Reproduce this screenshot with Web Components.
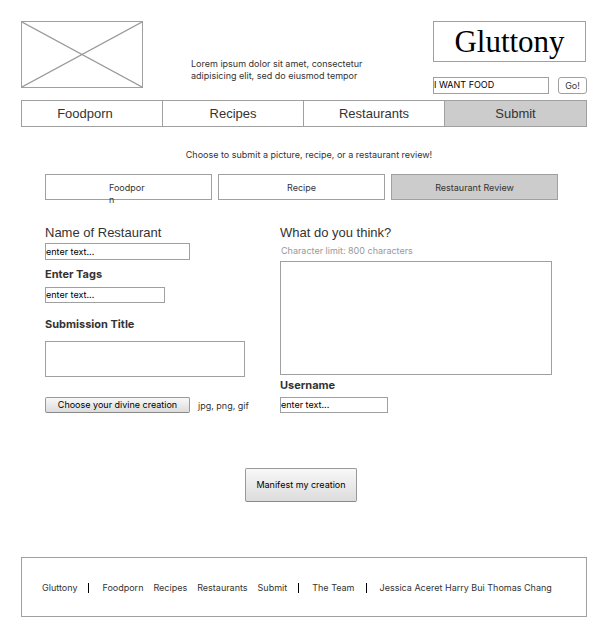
<!DOCTYPE html>
<html lang="en">
<head>
<meta charset="utf-8">
<meta name="viewport" content="width=device-width, initial-scale=1">
<title>Gluttony – Submit</title>
<style>
  body {
    margin: 0;
    padding: 21px 25px 20px 21px;
    background: #fff;
    color: #333;
    font: 9px/12px Inter, "Liberation Sans", sans-serif;
    --line: #a0a0a0;
    --active: #ccc;
    --heading: "Liberation Sans", Arial, sans-serif;
  }
</style>
</head>
<body>
<gluttony-page></gluttony-page>

<script>
const base = `
  *, *::before, *::after { box-sizing: border-box; }
  button, input, textarea { font: inherit; margin: 0; border-radius: 0; outline: 0; }
  a { color: inherit; text-decoration: none; }
`;

function define(name, css, html) {
  customElements.define(name, class extends HTMLElement {
    constructor() {
      super();
      this.attachShadow({ mode: 'open' }).innerHTML =
        `<style>${base}${css}</style>${typeof html === 'function' ? html(this) : html}`;
    }
  });
}

define('image-placeholder', `
  :host { display: block; width: 122px; height: 67px; border: 1px solid var(--line); box-sizing: border-box; }
  svg { display: block; width: 100%; height: 100%; }
`, `<svg viewBox="0 0 120 65" preserveAspectRatio="none" role="img" aria-label="Image placeholder">
  <path d="M0 0L120 65M0 65L120 0" fill="none" stroke="#999" stroke-width="1.2"/></svg>`);

define('site-search', `
  :host { display: block; }
  form { display: flex; justify-content: space-between; gap: 9px; margin: 0; }
  input { flex: 0 1 116px; min-width: 0; height: 17px; padding: 0 0 2px; border: 1px solid var(--line); background: #fff; color: #000; }
  button { flex: none; width: 29px; height: 17px; padding: 0; border: 1px solid var(--line); border-radius: 3px; background: #fff; color: #333; }
`, `<form><input type="text" aria-label="Search food" value="I WANT FOOD"><button type="button">Go!</button></form>`);

define('site-header', `
  :host { display: flex; height: 79px; align-items: flex-start; }
  p { margin: 37px 0 0 48px; max-width: 180px; }
  .brand { margin-left: auto; width: 154px; display: grid; gap: 15px; }
  h1 { margin: 0 1px 0 0; height: 41px; border: 1px solid var(--line); font: 31px/39px "Liberation Serif", "Times New Roman", serif; color: #000; text-align: center; }
`, `<image-placeholder></image-placeholder>
  <p>Lorem ipsum dolor sit amet, consectetur adipisicing elit, sed do eiusmod tempor</p>
  <div class="brand"><h1>Gluttony</h1><site-search></site-search></div>`);

define('main-nav', `
  :host { display: block; }
  nav { display: grid; grid-template-columns: repeat(4, 1fr); border: 1px solid var(--line); font: 13px/25px var(--heading); }
  a { text-align: center; border-right: 1px solid var(--line); }
  a:first-child { padding-right: 14px; }
  a:last-child { border-right: 0; }
  a[aria-current] { background: var(--active); }
`, `<nav aria-label="Main"><a href="#foodporn">Foodporn</a><a href="#recipes">Recipes</a><a href="#restaurants">Restaurants</a><a href="#submit" aria-current="page">Submit</a></nav>`);

define('type-picker', `
  :host { display: grid; grid-template-columns: repeat(3, 1fr); gap: 6px; }
  button { height: 26px; padding: 7px 0 0; border: 1px solid var(--line); background: #fff; color: #333; display: flex; justify-content: center; align-items: flex-start; }
  button[aria-pressed=true] { background: var(--active); }
  .narrow { width: 37px; margin-right: 2px; text-align: left; overflow-wrap: anywhere; }
`, `<button type="button" aria-pressed="false"><span class="narrow">Foodporn</span></button>
  <button type="button" aria-pressed="false">Recipe</button>
  <button type="button" aria-pressed="true">Restaurant Review</button>`);

define('form-field', `
  :host { display: block; }
  label { display: block; font: bold 11px/14px Inter, "Liberation Sans", sans-serif; }
  label.large { font: 13px/18px var(--heading); }
  small { display: block; font-size: 9px; line-height: 12px; color: #999; margin: 3px 0 4px 1px; }
  input, textarea { display: block; width: 100%; height: var(--h, 16px); padding: 0 0 1px; border: 1px solid var(--line); background: #fff; color: #000; resize: none; }
  .box { padding-top: var(--gap, 5px); max-width: var(--w, 100%); }
`, el => {
  const a = n => el.getAttribute(n) || '';
  const note = a('note') ? `<small id="note">${a('note')}</small>` : '';
  const described = note ? ' aria-describedby="note"' : '';
  const control = el.hasAttribute('multiline')
    ? `<textarea id="control"${described}></textarea>`
    : `<input id="control" type="text" value="${a('value')}"${described}>`;
  return `<label for="control" class="${el.hasAttribute('large') ? 'large' : ''}">${a('label')}</label>${note}<div class="box">${control}</div>`;
});

define('push-button', `
  :host { display: block; }
  button { display: block; width: 100%; height: 100%; padding: 0; border: 1px solid #999; border-bottom-color: #888; border-radius: 2px; background: linear-gradient(#f8f8f8, #dcdcdc); color: #000; white-space: nowrap; }
`, `<button type="button"><slot></slot></button>`);

define('review-form', `
  :host { display: block; }
  form { margin: 24px 30px 0 24px; }
  .columns { display: grid; grid-template-columns: 200fr 272fr; gap: 35px; padding-right: 5px; }
  .columns > div { min-width: 0; }
  .name { --w: 145px; --h: 17px; --gap: 1px; }
  .tags { --w: 120px; --gap: 6px; margin-top: 7px; }
  .title { --h: 36px; --gap: 10px; margin-top: 14px; }
  .upload { display: flex; align-items: center; gap: 8px; height: 16px; margin-top: 20px; white-space: nowrap; }
  .upload push-button { flex: none; width: 145px; height: 16px; }
  .upload span { padding-top: 2px; }
  .review { --h: 114px; --gap: 0px; }
  .user { --w: 108px; margin-top: 3px; }
  .send { width: 112px; height: 34px; margin: 55px auto 0; }
`, `<form>
    <div class="columns">
      <div>
        <form-field class="name" large label="Name of Restaurant" value="enter text..."></form-field>
        <form-field class="tags" label="Enter Tags" value="enter text..."></form-field>
        <form-field class="title" label="Submission Title" multiline></form-field>
        <div class="upload"><push-button>Choose your divine creation</push-button><span>jpg, png, gif</span></div>
      </div>
      <div>
        <form-field class="review" large label="What do you think?" note="Character limit: 800 characters" multiline></form-field>
        <form-field class="user" label="Username" value="enter text..."></form-field>
      </div>
    </div>
    <push-button class="send">Manifest my creation</push-button>
  </form>`);

define('site-footer', `
  :host { display: block; }
  footer { display: flex; align-items: center; gap: 10px; min-height: 60px; padding: 1px 20px 0; border: 1px solid var(--line); white-space: nowrap; }
  i { width: 1px; height: 10px; background: #000; margin: 0 3px 0 1px; }
`, `<footer><a href="#home">Gluttony</a><i></i><a href="#foodporn">Foodporn</a><a href="#recipes">Recipes</a><a href="#restaurants">Restaurants</a><a href="#submit">Submit</a><i></i><a href="#team">The Team</a><i></i><span>Jessica Aceret Harry Bui Thomas Chang</span></footer>`);

define('gluttony-page', `
  :host { display: block; }
  .prompt { margin: 22px 0 13px; padding-left: 10px; text-align: center; }
  type-picker { margin: 0 29px 0 24px; }
  site-footer { margin-top: 55px; }
`, `<site-header></site-header>
  <main-nav></main-nav>
  <main>
    <p class="prompt">Choose to submit a picture, recipe, or a restaurant review!</p>
    <type-picker></type-picker>
    <review-form></review-form>
  </main>
  <site-footer></site-footer>`);
</script>
</body>
</html>
